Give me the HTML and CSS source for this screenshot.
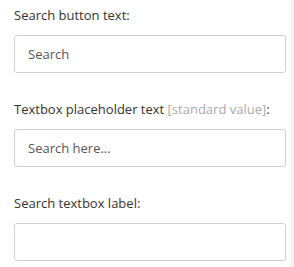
FILE: index.html
```html
<!DOCTYPE html>
<html>
<head>
	<meta charset="utf-8" />
	<title>Search settings</title>
	<link rel="stylesheet" href="styles.css">
</head>
<body>
	<div class="panel">
		<div class="field">
			<label class="caption" for="btntext">Search button text:</label>
			<input class="textbox" id="btntext" type="text" value="Search" />
		</div>
		<div class="field">
			<label class="caption" for="placeholder">Textbox placeholder text <span class="hint">[standard value]</span>:</label>
			<input class="textbox" id="placeholder" type="text" value="Search here..." />
		</div>
		<div class="field">
			<label class="caption" for="boxlabel">Search textbox label:</label>
			<input class="textbox" id="boxlabel" type="text" value="" />
		</div>
	</div>
	<div class="edge"></div>
</body>
</html>
```

FILE: styles.css
```css
html, body {
	height: 100%;
}

body {
	margin: 0;
	padding: 0;
	display: flex;
	background: #fff;
	font-family: "Open Sans", sans-serif;
	font-size: 13px;
	color: #333;
}

.panel {
	flex: 1;
	padding: 6px 4px 0 14px;
}

.edge {
	width: 4px;
	background: #f4f4f4;
}

.field {
	display: flex;
	flex-direction: column;
	margin-bottom: 27px;
}

.caption {
	line-height: 18px;
	margin-bottom: 11px;
	color: #333;
}

	.caption .hint {
		color: #aaa;
	}

.textbox {
	box-sizing: border-box;
	width: 272px;
	height: 38px;
	margin: 0;
	padding: 0 13px;
	border: 1px solid #d0d0d0;
	border-radius: 3px;
	font-family: "Open Sans", sans-serif;
	font-size: 13px;
	color: #555;
	background: #fff;
	outline: none;
}
```
